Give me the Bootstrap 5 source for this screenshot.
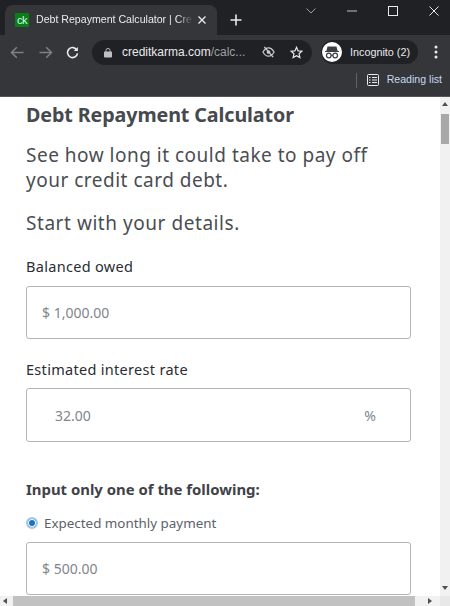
<!DOCTYPE html>
<html lang="en"><head><meta charset="utf-8"><title>Debt Repayment Calculator</title>
<link href="https://cdn.jsdelivr.net/npm/bootstrap@5.3.0/dist/css/bootstrap.min.css" rel="stylesheet">
<style>
html,body{margin:0;height:606px;overflow:hidden;background:#fff}
body{font-family:"Noto Sans",sans-serif;width:450px}
.ui{font-family:"Liberation Sans",sans-serif}
.tabstrip{height:35px;background:#202124;padding-left:5px}
.tabshape{width:212px;height:30px;margin-top:5px;background:#35363a;border-radius:8px 8px 0 0;padding:0 10px;color:#e8eaed;font-size:10.6px;white-space:nowrap}
.favi{width:14px;height:14px;background:#0a7d18;color:#cfe;font-size:11px;line-height:14px;text-align:center;border-radius:1px;flex:none;letter-spacing:-.5px}
.tabtitle{width:157px;margin-left:7px;margin-right:4px;flex:none;-webkit-mask-image:linear-gradient(90deg,#000 90%,transparent)}
.newtab{margin-left:13px;margin-top:14px}
.winctl{margin-left:auto;margin-right:-4px;height:22px;align-self:flex-start}
.winslot{width:41px;display:flex;justify-content:center;align-items:center;height:22px}
.toolbar{height:34px;background:#35363a;padding:0 8px 0 10px}
.navback{margin-right:15px}
.navfwd{margin-right:13px}
.omni{width:220px;height:25px;border-radius:13px;background:#202124;color:#e8eaed;font-size:12px;margin-left:13px;padding:0 9px 0 12px;flex:none}
.omni .dim{color:#9aa0a6}
.host{margin-left:10px;margin-right:auto;white-space:nowrap}
.eyeoff{margin-right:15px}
.profile{height:24px;width:97px;border-radius:12px;background:#202124;color:#e8eaed;font-size:10.8px;margin-left:9px;padding-left:1px;flex:none}
.incog{width:20px;height:20px;border-radius:50%;background:#fff;margin-right:8px;flex:none}
.bmbar{height:28px;background:#35363a;color:#c8d8f0;font-size:10.6px;padding:0 8px 5px 0;border-bottom:1px solid #55565a}
.bmsep{width:1px;height:15px;background:#5f6368;margin-right:10px}
.viewport{height:509px}
.pagearea{flex:1;min-width:0;overflow:hidden;padding:6px 29px 0 26px;color:#4a4d52}
.vbar{width:10px;background:#f1f1f1;flex:none;position:relative}
.vthumb{height:30px;background:#a8a8a8;margin:8px 1px 0 1px}
.tri-up{width:0;height:0;border-left:3px solid transparent;border-right:3px solid transparent;border-bottom:4px solid #505050;margin:5px auto 0}
.tri-down{width:0;height:0;border-left:3px solid transparent;border-right:3px solid transparent;border-top:4px solid #505050;margin:auto auto 6px}
.hbar{height:10px;background:#f1f1f1}
.hthumb{flex:1;background:#c1c1c1;margin:0 6px 0 6px}
.tri-left{width:0;height:0;border-top:3px solid transparent;border-bottom:3px solid transparent;border-right:4px solid #505050;margin:2px 0 0 3px}
.tri-right{width:0;height:0;border-top:3px solid transparent;border-bottom:3px solid transparent;border-left:4px solid #505050;margin:2px 0 0 7px}
.hend{width:10px;flex:none;background:#e8e8e8;margin-left:8px}
.h-title{font-size:19.7px;font-weight:700;line-height:24px;margin:0 0 16px;color:#46494e;white-space:nowrap;letter-spacing:-.1px}
.lede{font-size:19px;line-height:25px;margin:0 0 18px;color:#4a4d52;letter-spacing:.5px}
.lede-s{margin-bottom:20px;letter-spacing:.55px}
.fldlabel{font-size:14.5px;line-height:20px;color:#2a2d31;margin-bottom:10px;display:block;letter-spacing:.3px}
.fld2{margin-bottom:9px}
.fldbox{height:53px;border:1px solid #b4b4b4;border-radius:3px;color:#80868c;font-size:14px;padding:0 15px;margin-bottom:20px}
.fld-rate{height:54px;padding:0 34px 0 28px;margin-bottom:37px}
.group-h{font-size:14.9px;font-weight:700;line-height:20px;color:#3f4247;margin-bottom:15px}
.radio-dot{width:12px;height:12px;border-radius:50%;border:2px solid #9cc8ef;background:#2172b8;box-shadow:inset 0 0 0 1px #fff;flex:none;margin-right:6px}
.radio-row{font-size:13.4px;line-height:18px;color:#5c6268;margin-bottom:10px}
.fld-last{margin-bottom:0}
</style></head>
<body>
<div class="tabstrip d-flex ui">
  <div class="tabshape d-flex align-items-center">
    <span class="favi">ck</span><span class="tabtitle">Debt Repayment Calculator | Cre</span>
    <svg width="10" height="10" viewBox="0 0 10 10"><path d="M1.5 1.5l7 7M8.5 1.5l-7 7" stroke="#e8eaed" stroke-width="1.4" fill="none"/></svg>
  </div>
  <svg class="newtab" width="12" height="12" viewBox="0 0 12 12"><path d="M6 .5v11M.5 6h11" stroke="#e8eaed" stroke-width="1.6"/></svg>
  <div class="winctl d-flex">
    <div class="winslot"><svg width="10" height="6" viewBox="0 0 10 6"><path d="M.5.500 5 5 9.500.500" stroke="#9aa0a6" fill="none"/></svg></div>
    <div class="winslot"><svg width="10" height="2" viewBox="0 0 10 2"><path d="M0 1h10" stroke="#bdc1c6"/></svg></div>
    <div class="winslot"><svg width="10" height="10" viewBox="0 0 10 10"><rect x=".5" y=".5" width="9" height="9" stroke="#e8eaed" fill="none"/></svg></div>
    <div class="winslot"><svg width="10" height="10" viewBox="0 0 10 10"><path d="M.5.500l9 9M9.500.500l-9 9" stroke="#e8eaed" fill="none"/></svg></div>
  </div>
</div>
<div class="toolbar d-flex align-items-center ui">
  <svg width="14" height="13" viewBox="0 0 14 13" class="navback"><path d="M13.500 6.500H1.500M6.800 1.200 1.500 6.500l5.300 5.300" stroke="#7d8187" stroke-width="1.500" fill="none"/></svg>
  <svg width="14" height="13" viewBox="0 0 14 13" class="navfwd"><path d="M.5 6.500h12M7.200 1.200l5.300 5.300-5.300 5.300" stroke="#7d8187" stroke-width="1.500" fill="none"/></svg>
  <svg width="13" height="13" viewBox="0 0 14 14"><path d="M11.800 4.500A5.400 5.400 0 1 0 12.400 8" stroke="#e8eaed" stroke-width="1.700" fill="none"/><path d="M12.800 1v4.500H8.300z" fill="#e8eaed"/></svg>
  <div class="omni d-flex align-items-center">
    <svg width="8" height="11" viewBox="0 0 9 11"><path d="M2.200 5V3.200a2.300 2.300 0 0 1 4.600 0V5" stroke="#bdc1c6" fill="none"/><rect y="4.500" width="9" height="6.500" rx="1" fill="#bdc1c6"/></svg>
    <span class="host">creditkarma.com<span class="dim">/calc...</span></span>
    <svg width="13" height="12" viewBox="0 0 14 12" class="eyeoff"><path d="M1 6c2-3.500 4-4.500 6-4.500S11 2.500 13 6c-2 3.500-4 4.500-6 4.500S3 9.500 1 6z" stroke="#c8ccd0" stroke-width="1.300" fill="none"/><circle cx="7" cy="6" r="2" fill="#c8ccd0"/><path d="M2.500 .5l9.500 11" stroke="#c8ccd0" stroke-width="1.500"/></svg>
    <svg width="13" height="13" viewBox="0 0 24 24"><path d="M12 2.500l2.900 6.500 7.100.7-5.300 4.700 1.500 7-6.200-3.600-6.200 3.600 1.500-7L2 9.700 9.100 9z" stroke="#e8eaed" stroke-width="2.200" fill="none"/></svg>
  </div>
  <div class="profile d-flex align-items-center">
    <span class="incog d-flex align-items-center justify-content-center"><svg width="16" height="13" viewBox="0 0 16 13"><path d="M4 1h8l1 4H3zM1 5.500h14" stroke="#3c4043" stroke-width="1.200" fill="#3c4043"/><circle cx="4.800" cy="9.500" r="2.300" stroke="#3c4043" stroke-width="1.200" fill="none"/><circle cx="11.200" cy="9.500" r="2.300" stroke="#3c4043" stroke-width="1.200" fill="none"/><path d="M7 9.300h2" stroke="#3c4043"/></svg></span>Incognito (2)
  </div>
  <svg width="4" height="14" viewBox="0 0 4 14" class="ms-auto me-1"><circle cx="2" cy="2" r="1.500" fill="#e8eaed"/><circle cx="2" cy="7" r="1.500" fill="#e8eaed"/><circle cx="2" cy="12" r="1.500" fill="#e8eaed"/></svg>
</div>
<div class="bmbar d-flex align-items-center justify-content-end ui">
  <span class="bmsep"></span>
  <svg width="12" height="12" viewBox="0 0 12 12" class="me-2"><rect x=".5" y=".5" width="11" height="11" rx="1" stroke="#e8eaed" fill="none"/><path d="M2 3.500h1.500M5 3.500h5M2 6h1.500M5 6h5M2 8.500h1.500M5 8.500h5" stroke="#e8eaed"/></svg>
  <span>Reading list</span>
</div>
<div class="viewport d-flex flex-column">
  <div class="d-flex flex-grow-1" style="min-height:0">
    <div class="pagearea">
      <h1 class="h-title">Debt Repayment Calculator</h1>
      <p class="lede">See how long it could take to pay off your credit card debt.</p>
      <p class="lede lede-s">Start with your details.</p>
      <label class="fldlabel">Balanced owed</label>
      <div class="fldbox d-flex align-items-center">$ 1,000.00</div>
      <label class="fldlabel fld2">Estimated interest rate</label>
      <div class="fldbox fld-rate d-flex align-items-center justify-content-between"><span>32.00</span><span>%</span></div>
      <div class="group-h">Input only one of the following:</div>
      <div class="radio-row d-flex align-items-center"><span class="radio-dot"></span>Expected monthly payment</div>
      <div class="fldbox fld-last d-flex align-items-center">$ 500.00</div>
    </div>
    <div class="vbar d-flex flex-column"><div class="tri-up"></div><div class="vthumb"></div><div class="tri-down"></div></div>
  </div>
  <div class="hbar d-flex"><div class="tri-left"></div><div class="hthumb"></div><div class="tri-right"></div><div class="hend"></div></div>
</div>
<script src="https://cdn.jsdelivr.net/npm/bootstrap@5.3.0/dist/js/bootstrap.bundle.min.js"></script>
</body></html>
